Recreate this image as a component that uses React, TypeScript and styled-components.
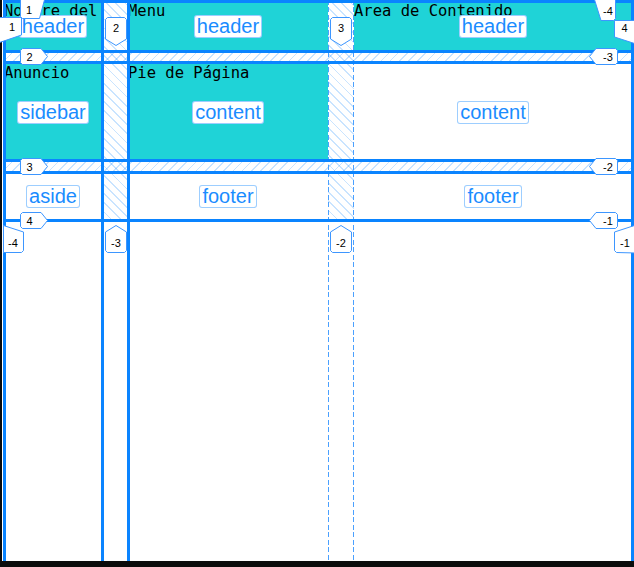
import React from "react";
import styled, { createGlobalStyle } from "styled-components";

const BLUE = "#0a84ff";
const CYAN = "#1fd3d7";

const GlobalStyle = createGlobalStyle`
  html, body {
    margin: 0;
    background: #0b0b0b;
  }
`;

const Page = styled.div`
  position: relative;
  width: 634px;
  height: 561px;
  background: #fff;
  box-shadow: inset 2px 0 0 #0b0b0b;
  overflow: hidden;
`;

// the page itself: a plain css grid with five items
const Layout = styled.div`
  display: grid;
  grid-template-columns: 98px 200px 278px;
  grid-template-rows: 50px 98px 48px;
  gap: 11.5px 26px;
  width: 628px;
  margin: 1px 0 0 4px;
`;

const Cell = styled.div`
  background: ${CYAN};
  color: #000;
  font-family: "DejaVu Sans Mono", "Liberation Mono", monospace;
  font-size: 15.5px;
  line-height: 17px;
  padding-top: 2px;
  min-width: 0;
`;

// inspector overlay
const Overlay = styled.div`
  position: absolute;
  inset: 0;
  pointer-events: none;
`;

const ColGap = styled.div<{ $x: number; $w: number }>`
  position: absolute;
  top: 1px;
  height: 219px;
  left: ${(p) => p.$x}px;
  width: ${(p) => p.$w}px;
  background: repeating-linear-gradient(
    45deg,
    rgba(10, 132, 255, 0.22) 0 1.2px,
    transparent 1.2px 6.5px
  );
`;

const RowGap = styled.div<{ $y: number; $h: number }>`
  position: absolute;
  left: 4px;
  width: 628px;
  top: ${(p) => p.$y}px;
  height: ${(p) => p.$h}px;
  background: repeating-linear-gradient(
    135deg,
    rgba(10, 132, 255, 0.22) 0 1.2px,
    transparent 1.2px 6.5px
  );
`;

const VLine = styled.div<{ $x: number }>`
  position: absolute;
  top: 0;
  bottom: 0;
  left: ${(p) => p.$x - 1}px;
  width: 3px;
  background: ${BLUE};
`;

const DashLine = styled.div<{ $x: number }>`
  position: absolute;
  top: 0;
  bottom: 0;
  left: ${(p) => p.$x}px;
  width: 1px;
  background: repeating-linear-gradient(
    to bottom,
    #4aa0ff 0 5px,
    transparent 5px 7.5px
  );
`;

const HLine = styled.div<{ $y: number }>`
  position: absolute;
  left: 3px;
  width: 631px;
  top: ${(p) => p.$y - 1}px;
  height: 3px;
  background: ${BLUE};
`;

const AreaGrid = styled(Layout)`
  position: absolute;
  top: 0;
  left: 0;
  grid-template-areas:
    "header header header"
    "sidebar content content"
    "aside footer footer";
`;

const AreaSlot = styled.div`
  display: flex;
  align-items: center;
  justify-content: center;
  padding-top: 1px;
`;

const AreaName = styled.span`
  background: #fff;
  border: 1px solid rgba(10, 132, 255, 0.4);
  border-radius: 3px;
  padding: 0 2px;
  color: #1a8cff;
  font-family: "Liberation Sans", Arial, sans-serif;
  font-size: 20px;
  line-height: 21px;
`;

const Tag = styled.div<{ $x: number; $y: number; $w: number; $h: number }>`
  position: absolute;
  left: ${(p) => p.$x}px;
  top: ${(p) => p.$y}px;
  width: ${(p) => p.$w}px;
  height: ${(p) => p.$h}px;

  svg {
    position: absolute;
    inset: 0;
    overflow: visible;
  }
`;

const TagText = styled.span<{ $tx: number; $ty: number }>`
  position: absolute;
  left: ${(p) => p.$tx}px;
  top: ${(p) => p.$ty}px;
  transform: translate(-50%, -50%);
  font-family: "Liberation Sans", Arial, sans-serif;
  font-size: 11px;
  line-height: 11px;
  color: #000;
  white-space: nowrap;
`;

interface LineTag {
  text: string;
  x: number;
  y: number;
  w: number;
  h: number;
  pts: string;
  tx: number;
  ty: number;
}

const down = "0.5,2.5 2.5,0.5 19.5,0.5 21.5,2.5 21.5,22 11,28.5 0.5,22";
const up = "11,0.5 21.5,7 21.5,25.5 19.5,27.5 2.5,27.5 0.5,25.5 0.5,7";
const right = "0.5,2.5 2.5,0.5 21,0.5 27.5,8.5 21,16.5 2.5,16.5 0.5,14.5";
const left = "0.5,8.5 7,0.5 26.5,0.5 28.5,2.5 28.5,14.5 26.5,16.5 7,16.5";

const tags: LineTag[] = [
  // columns, top
  { text: "1", x: 20, y: 0, w: 25, h: 19, pts: "0.5,-2 25,-2 19.5,18.5 2.5,18.5 0.5,16.5", tx: 9, ty: 10 },
  { text: "2", x: 105, y: 17, w: 22, h: 29, pts: down, tx: 11, ty: 10.5 },
  { text: "3", x: 330, y: 17, w: 22, h: 29, pts: down, tx: 11, ty: 10.5 },
  { text: "4", x: 614, y: 20, w: 21, h: 24, pts: "0.5,0.5 22,0.5 22,24 0.5,17", tx: 10.5, ty: 8 },
  // rows, left
  { text: "1", x: 0, y: 17, w: 22, h: 26, pts: "-2,0.5 21.5,0.5 21.5,18 -2,26", tx: 12, ty: 10 },
  { text: "2", x: 20, y: 48, w: 28, h: 17, pts: right, tx: 9.5, ty: 8.5 },
  { text: "3", x: 20, y: 158, w: 28, h: 17, pts: right, tx: 9.5, ty: 8.5 },
  { text: "4", x: 20, y: 212, w: 28, h: 17, pts: right, tx: 9.5, ty: 8.5 },
  // rows, right
  { text: "-4", x: 594, y: 0, w: 22, h: 21, pts: "0,-2 21.5,-2 21.5,18.5 19.5,20.5 7,20.5", tx: 14, ty: 10.5 },
  { text: "-3", x: 589, y: 48, w: 29, h: 17, pts: left, tx: 19, ty: 8.5 },
  { text: "-2", x: 589, y: 158, w: 29, h: 17, pts: left, tx: 19, ty: 8.5 },
  { text: "-1", x: 589, y: 212, w: 29, h: 17, pts: left, tx: 19, ty: 8.5 },
  // columns, bottom
  { text: "-4", x: 3, y: 225, w: 21, h: 28, pts: "0.5,0.5 20.5,7 20.5,25.5 18.5,27.5 0.5,27.5", tx: 10, ty: 18 },
  { text: "-3", x: 105, y: 225, w: 22, h: 28, pts: up, tx: 11, ty: 17.5 },
  { text: "-2", x: 330, y: 225, w: 22, h: 28, pts: up, tx: 11, ty: 17.5 },
  { text: "-1", x: 614, y: 225, w: 21, h: 28, pts: "0.5,7 22,0 22,28 2.5,27.5 0.5,25.5", tx: 11, ty: 17.5 },
];

const items = [
  "Nombre del Sitio",
  "Menu",
  "Area de Contenido",
  "Anuncio",
  "Pie de Página",
];

const areas = [
  "header", "header", "header",
  "sidebar", "content", "content",
  "aside", "footer", "footer",
];

const App: React.FC = () => {
  return (
    <>
      <GlobalStyle />
      <Page>
        <Layout>
          {items.map((text, i) => (
            <Cell key={i}>{text}</Cell>
          ))}
        </Layout>

        <Overlay>
          <ColGap $x={102} $w={26} />
          <ColGap $x={328} $w={26} />
          <RowGap $y={51} $h={11} />
          <RowGap $y={160} $h={12} />

          {[4, 102, 128, 632].map((x) => (
            <VLine key={x} $x={x} />
          ))}
          <DashLine $x={328} />
          <DashLine $x={353} />
          {[1, 51, 62, 160, 172, 220].map((y) => (
            <HLine key={y} $y={y} />
          ))}

          <AreaGrid>
            {areas.map((name, i) => (
              <AreaSlot key={i}>
                <AreaName>{name}</AreaName>
              </AreaSlot>
            ))}
          </AreaGrid>

          {tags.map((t, i) => (
            <Tag key={i} $x={t.x} $y={t.y} $w={t.w} $h={t.h}>
              <svg width={t.w} height={t.h}>
                <polygon points={t.pts} fill="#fff" stroke="#3d96ff" strokeWidth={1} strokeLinejoin="round" />
              </svg>
              <TagText $tx={t.tx} $ty={t.ty}>{t.text}</TagText>
            </Tag>
          ))}
        </Overlay>
      </Page>
    </>
  );
};

export default App;
